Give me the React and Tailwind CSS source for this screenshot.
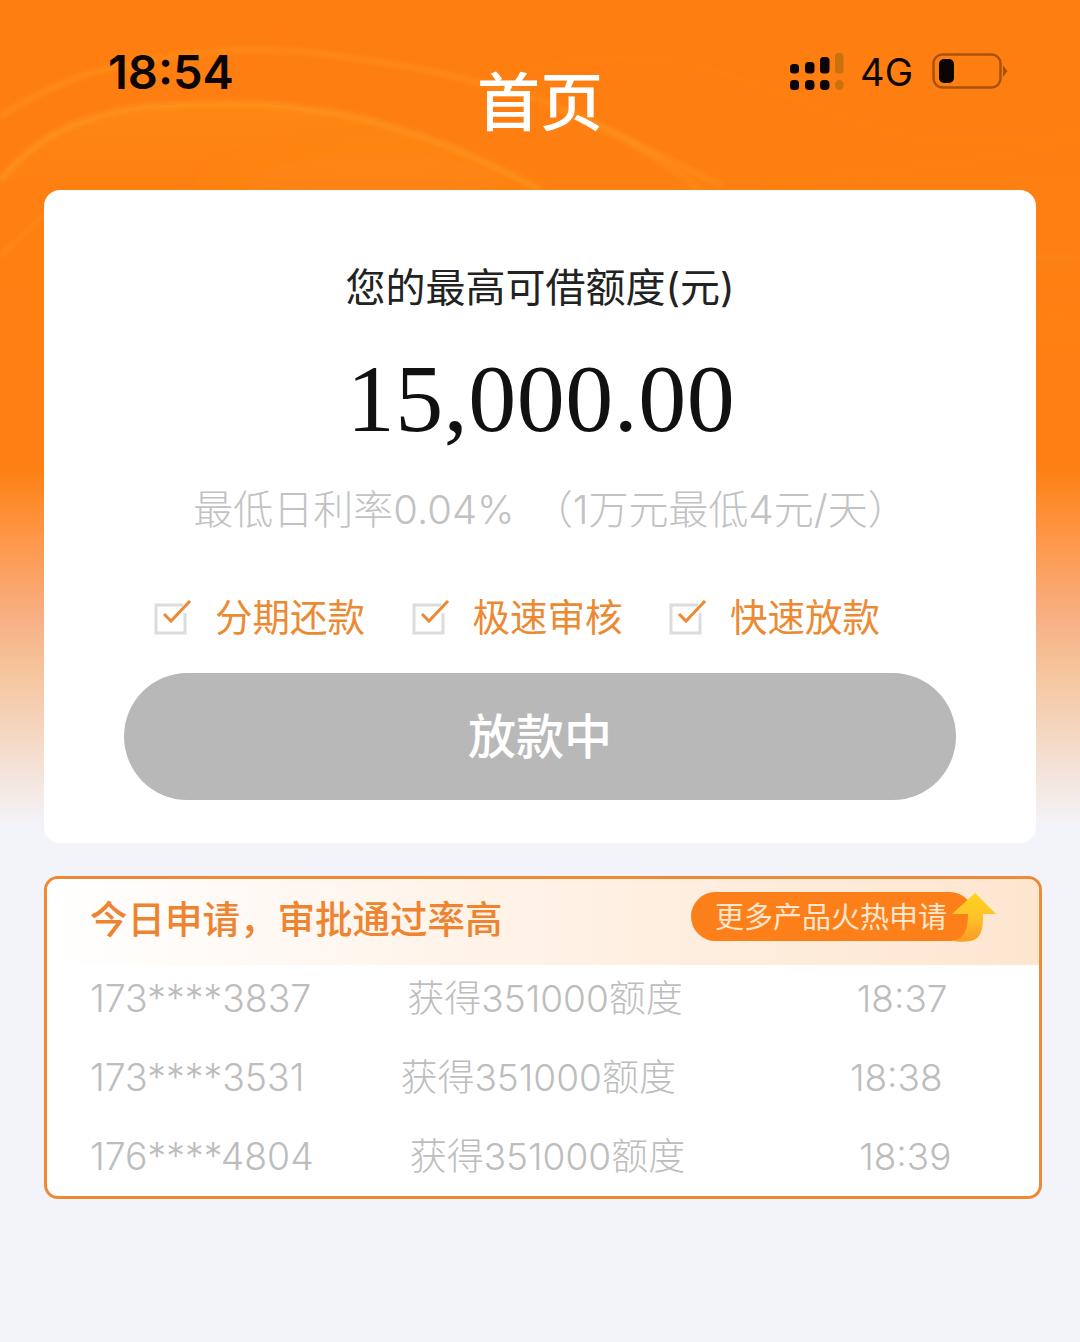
const sans = "font-['Inter','Noto_Sans_CJK_SC',sans-serif]";

function Waves() {
  return (
    <svg className="absolute left-0 top-0 pointer-events-none" width="1080" height="360" viewBox="0 0 1080 360" fill="none">
      <defs>
        <filter id="blurS" x="-10%" y="-30%" width="120%" height="160%"><feGaussianBlur stdDeviation="2.500" /></filter>
        <filter id="blurL" x="-10%" y="-30%" width="120%" height="160%"><feGaussianBlur stdDeviation="12" /></filter>
        <linearGradient id="underB" x1="0" y1="100" x2="0" y2="190" gradientUnits="userSpaceOnUse">
          <stop offset="0" stopColor="#ff9416" stopOpacity="0.45" />
          <stop offset="0.6" stopColor="#ff8c12" stopOpacity="0.3" />
          <stop offset="1" stopColor="#ff8a10" stopOpacity="0.08" />
        </linearGradient>
      </defs>
      <path d="M0 180C30 145 60 128 86 120C120 108 150 105 172 105C210 103 250 103 276 105C320 110 350 114 379 123C410 132 440 142 465 153C495 167 520 178 540 190H0Z" fill="url(#underB)" />
      <g filter="url(#blurL)">
        <path d="M200 190C300 150 420 130 540 190Z" fill="#ff9518" fillOpacity="0.25" />
        <path d="M1036 325H1080V335H1036Z" fill="#ff9516" fillOpacity="0.35" />
      </g>
      <g filter="url(#blurS)">
        <path d="M0 180C30 145 60 128 86 120C120 108 150 105 172 105C210 103 250 103 276 105C320 110 350 114 379 123C410 132 440 142 465 153C495 167 520 178 540 190" stroke="#ffa428" strokeOpacity="0.5" strokeWidth="5" />
        <path d="M0 117C30 96 70 78 103 70C150 58 200 52 241 50C280 49 315 52 345 57C380 62 415 67 448 75C480 83 510 90 540 100C565 110 590 120 609 130C650 150 690 170 723 187" stroke="#ffa428" strokeOpacity="0.35" strokeWidth="5" />
        <path d="M560 110C610 128 660 158 700 190" stroke="#ffa428" strokeOpacity="0.25" strokeWidth="7" />
        <path d="M520 70C590 55 660 55 712 70C760 85 810 105 850 120C920 145 1010 150 1080 130" stroke="#ff9216" strokeOpacity="0.2" strokeWidth="4" />
        <path d="M0 257C15 242 30 228 44 215" stroke="#ffa428" strokeOpacity="0.4" strokeWidth="3" />
        <path d="M1036 258H1080" stroke="#ffa040" strokeOpacity="0.4" strokeWidth="2" />
        <path d="M760 188C830 170 960 172 1080 140" stroke="#ff8a14" strokeOpacity="0.2" strokeWidth="4" />
      </g>
    </svg>
  );
}

function Signal() {
  return (
    <svg width="54" height="38" viewBox="0 0 54 38" className="block">
      <g fill="#0b0604">
        <rect x="0" y="11" width="9" height="9.500" rx="3.500" />
        <rect x="15" y="9" width="9.500" height="11.500" rx="3.500" />
        <rect x="30" y="4" width="9.500" height="16.500" rx="3.500" />
        <rect x="0" y="27" width="9" height="10" rx="3.500" />
        <rect x="15" y="27" width="9.500" height="10" rx="4" />
        <rect x="30" y="27" width="9.500" height="10" rx="4" />
      </g>
      <g fill="#c9700f">
        <rect x="45" y="0" width="8.500" height="20.500" rx="3.500" />
        <rect x="45" y="27" width="8.500" height="10" rx="4.250" />
      </g>
    </svg>
  );
}

function Battery() {
  return (
    <svg width="76" height="36" viewBox="0 0 76 36" className="block">
      <rect x="1.500" y="1.500" width="67" height="33" rx="9" fill="none" stroke="#a8520c" strokeWidth="2.500" />
      <rect x="7" y="6" width="15" height="24" rx="5" fill="#0b0604" />
      <path d="M71 12.500L75.500 18L71 24Z" fill="#a8520c" />
    </svg>
  );
}

function Check() {
  return (
    <svg width="38" height="36" viewBox="0 0 38 36" fill="none" className="block shrink-0">
      <path d="M29 5H2V33H31V13" stroke="#dcdcdf" strokeWidth="3" />
      <path d="M10 14L17 21L36 1" stroke="#ec8a34" strokeWidth="3" />
    </svg>
  );
}

function Feature({ text }) {
  return (
    <div className="flex w-[257.500px] items-center gap-[23px]">
      <Check />
      <span className="text-[37.500px] leading-[44px] text-[#ec8a34] whitespace-nowrap">{text}</span>
    </div>
  );
}

function Arrow() {
  return (
    <svg width="48" height="50" viewBox="0 0 48 50" className="absolute left-[259px] top-[1px]">
      <defs>
        <linearGradient id="arrowFill" x1="0" y1="0" x2="0" y2="1">
          <stop offset="0" stopColor="#ffd21f" />
          <stop offset="0.5" stopColor="#fdc22a" />
          <stop offset="1" stopColor="#fb9a24" />
        </linearGradient>
      </defs>
      <path d="M25 0L46 21H33C33 33 33 46 20 48C14 49 8 49 3 48C12 46 18 40 18 21H2Z" fill="url(#arrowFill)" />
    </svg>
  );
}

function Row({ phone, amount, time }) {
  return (
    <div className="flex h-[79px] items-center pb-[11px] pl-[43px] text-[37px] font-light text-[#bdbdbd] whitespace-nowrap">
      <span className="text-[37.400px]">{phone}</span>
      <span className="ml-[96px]">{amount}</span>
      <span className="ml-[174px]">{time}</span>
    </div>
  );
}

export default function App() {
  return (
    <div className={`relative h-[1342px] w-[1080px] overflow-hidden bg-[linear-gradient(180deg,#fe7e10_0px,#fe8014_470px,#fe984a_540px,#f8b084_620px,#f6c49c_670px,#f4dccc_750px,#f3f4f9_825px,#f3f4f9_1342px)] ${sans}`}>
      <Waves />
      <div className="relative flex h-[190px] items-start justify-between pl-[108px] pr-[72px]">
        <div className="pt-[44px] text-[47px] font-semibold leading-[56px] text-[#0b0604]">18:54</div>
        <div className="absolute left-0 right-0 top-[66px] text-center text-[63px] font-medium leading-[72px] text-white">首页</div>
        <div className="flex items-center pt-[53px]">
          <Signal />
          <span className="ml-[16px] text-[38px] font-normal leading-[38px] text-[#0b0604]">4G</span>
          <span className="ml-[19px] mt-[-2px]"><Battery /></span>
        </div>
      </div>

      <div className="relative mx-[44px] flex h-[653px] w-[992px] flex-col items-center rounded-[16px] bg-white pt-[72px]">
        <div className="text-[40px] leading-[52px] text-[#222222]">您的最高可借额度(元)</div>
        <div className="mt-[30px] pl-[2px] font-['Liberation_Serif',serif] text-[96px] leading-[110px] tracking-[0.5px] text-[#111111]">15,000.00</div>
        <div className="mt-[31px] pl-[21px] text-[40px] font-light leading-[50px] text-[#c2c2c2] whitespace-nowrap">
          <span>最低日利率0.04%</span>
          <span className="ml-[7px]"> （1万元最低4元/天）</span>
        </div>
        <div className="mt-[61px] flex w-full pl-[110px]">
          <Feature text="分期还款" />
          <Feature text="极速审核" />
          <Feature text="快速放款" />
        </div>
        <div className="mt-[33px] flex h-[127px] w-[832px] items-center justify-center rounded-full bg-[#b8b8b8] text-[48px] font-medium text-white">放款中</div>
      </div>

      <div className="relative ml-[44px] mt-[33px] h-[323px] w-[998px] overflow-hidden rounded-[14px] border-[3px] border-[#ee8a35] bg-white">
        <div className="flex h-[86px] items-center justify-between bg-[linear-gradient(90deg,#ffffff_0%,#fff4ea_40%,#fde6d0_100%)] pl-[43px] pr-[48px]">
          <span className="mt-[-4px] text-[37.500px] font-medium text-[#ee8430]">今日申请，审批通过率高</span>
          <div className="relative mt-[-12px] flex h-[49px] w-[300px] items-center rounded-full">
            <div className="flex h-[49px] w-[283px] items-center rounded-full bg-[#fd7f1a] pl-[24px] pt-[3px] text-[29px] text-[#ffe7cf] whitespace-nowrap">更多产品火热申请</div>
            <Arrow />
          </div>
        </div>
        <Row phone="173****3837" amount="获得351000额度" time="18:37" />
        <Row phone="173****3531" amount="获得351000额度" time="18:38" />
        <Row phone="176****4804" amount="获得351000额度" time="18:39" />
      </div>
    </div>
  );
}
